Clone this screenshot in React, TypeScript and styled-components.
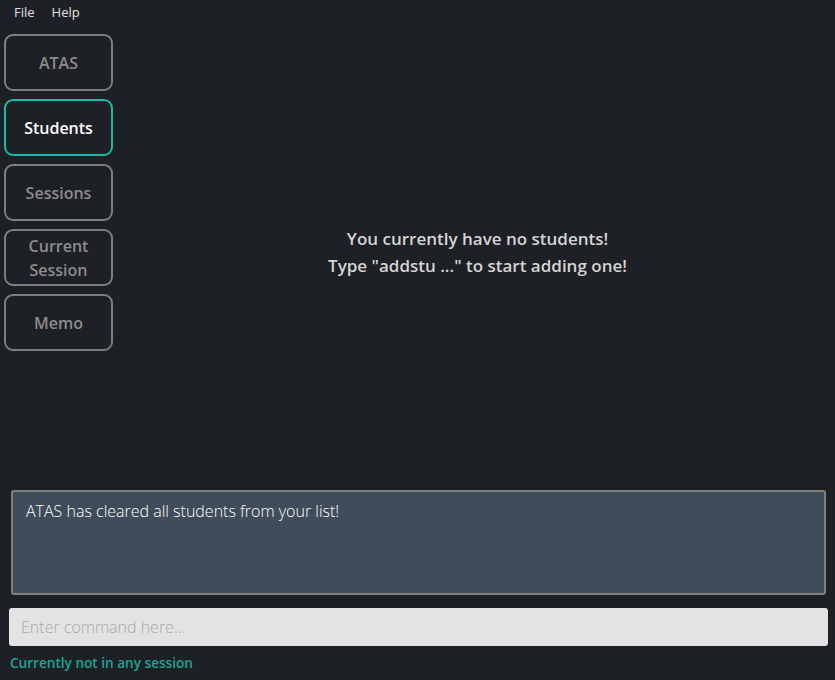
import React from 'react';
import styled, { createGlobalStyle } from 'styled-components';

const GlobalStyle = createGlobalStyle`
  html, body {
    margin: 0;
    padding: 0;
    background: #1d2025;
  }
  body {
    font-family: "Open Sans", "Noto Sans", sans-serif;
  }
`;

const Page = styled.div`
  width: 835px;
  height: 680px;
  display: flex;
  flex-direction: column;
  background: #1d2025;
  overflow: hidden;
`;

const MenuBar = styled.div`
  height: 24px;
  display: flex;
  align-items: center;
  gap: 17px;
  padding: 0 0 0 14px;
  font-size: 13px;
  color: #e0e0e0;
`;

const Body = styled.div`
  display: flex;
  height: 456px;
  padding-top: 10px;
  box-sizing: border-box;
  height: 466px;
`;

const Nav = styled.div`
  display: flex;
  flex-direction: column;
  gap: 8px;
  padding-left: 4px;
  width: 116px;
`;

const NavButton = styled.div<{ active?: boolean }>`
  box-sizing: border-box;
  flex: none;
  width: 109px;
  height: 57px;
  border: 2px solid ${p => (p.active ? '#1fb8a8' : '#7e7e7e')};
  border-radius: 9px;
  display: flex;
  align-items: center;
  justify-content: center;
  text-align: center;
  font-size: 16px;
  font-weight: 600;
  line-height: 24px;
  color: ${p => (p.active ? '#ffffff' : '#8c8c8c')};
`;

const Main = styled.div`
  flex: 1;
  display: flex;
  flex-direction: column;
  align-items: center;
  padding-top: 191px;
  font-size: 17px;
  font-weight: 600;
  line-height: 27px;
  color: #d4d4d4;
`;

const ResultBox = styled.div`
  box-sizing: border-box;
  margin: 0 9px 0 11px;
  height: 105px;
  background: #3f4c59;
  border: 2px solid #808080;
  border-radius: 3px;
  padding: 8px 13px;
  font-size: 16px;
  font-weight: 300;
  color: #ffffff;
`;

const CommandBox = styled.div`
  box-sizing: border-box;
  margin: 13px 7px 0 9px;
  height: 38px;
  background: #e3e3e3;
  border-radius: 3px;
  display: flex;
  align-items: center;
  padding: 0 12px;
  font-size: 16px;
  font-weight: 300;
  color: #a9a9a9;
`;

const Status = styled.div`
  margin: 7px 0 0 10px;
  font-size: 13.6px;
  font-weight: 600;
  color: #1ba596;
`;

const navItems = ['ATAS', 'Students', 'Sessions', 'Current Session', 'Memo'];

export default function App() {
  return (
    <Page>
      <GlobalStyle />
      <MenuBar>
        <span>File</span>
        <span>Help</span>
      </MenuBar>
      <Body>
        <Nav>
          {navItems.map(item => (
            <NavButton key={item} active={item === 'Students'}>
              {item === 'Current Session' ? (
                <span>Current<br />Session</span>
              ) : (
                item
              )}
            </NavButton>
          ))}
        </Nav>
        <Main>
          <div>You currently have no students!</div>
          <div>Type "addstu ..." to start adding one!</div>
        </Main>
      </Body>
      <ResultBox>ATAS has cleared all students from your list!</ResultBox>
      <CommandBox>Enter command here...</CommandBox>
      <Status>Currently not in any session</Status>
    </Page>
  );
}
